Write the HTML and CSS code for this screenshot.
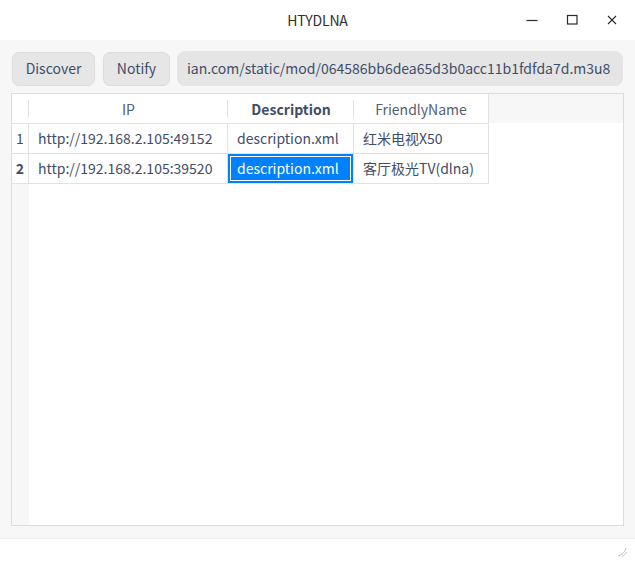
FILE: index.html
```html
<!DOCTYPE html>
<html>
<head>
<meta charset="utf-8">
<link rel="stylesheet" href="styles.css">
</head>
<body>
<div class="window">
  <div class="titlebar">
    <div class="title">HTYDLNA</div>
    <div class="controls">
      <svg class="ctl" width="16" height="16" viewBox="0 0 16 16"><path d="M2.5 8.5h11" stroke="#2b2b2b" stroke-width="1.2"/></svg>
      <svg class="ctl" width="16" height="16" viewBox="0 0 16 16"><rect x="3.5" y="3.5" width="9.5" height="8.5" fill="none" stroke="#2b2b2b" stroke-width="1.2"/></svg>
      <svg class="ctl" width="16" height="16" viewBox="0 0 16 16"><path d="M4 4l8 8M12 4l-8 8" stroke="#2b2b2b" stroke-width="1.1"/></svg>
    </div>
  </div>
  <div class="main">
    <div class="toolbar">
      <button class="btn btn-discover">Discover</button>
      <button class="btn btn-notify">Notify</button>
      <div class="lineedit"><span>ian.com/static/mod/064586bb6dea65d3b0acc11b1fdfda7d.m3u8</span></div>
    </div>
    <div class="table">
      <div class="row header">
        <div class="cell vh"></div>
        <div class="cell c-ip hc">IP</div>
        <div class="cell c-desc hc bold">Description</div>
        <div class="cell c-fn hc">FriendlyName</div>
        <div class="hfill"></div>
      </div>
      <div class="row">
        <div class="cell vh">1</div>
        <div class="cell c-ip">http://192.168.2.105:49152</div>
        <div class="cell c-desc">description.xml</div>
        <div class="cell c-fn">红米电视X50</div>
      </div>
      <div class="row">
        <div class="cell vh bold">2</div>
        <div class="cell c-ip">http://192.168.2.105:39520</div>
        <div class="cell c-desc selected"><span class="focus">description.xml</span></div>
        <div class="cell c-fn">客厅极光TV(dlna)</div>
      </div>
      <div class="rest">
        <div class="vhfill"></div>
      </div>
    </div>
  </div>
  <div class="statusbar">
    <svg class="grip" width="10" height="10" viewBox="0 0 10 10"><path d="M1 9C5 8 8 5 9 1M5 9.5C7 8.5 8.5 7 9.5 5" fill="none" stroke="#b8b8b8" stroke-width="0.9"/></svg>
  </div>
</div>
</body>
</html>
```

FILE: styles.css
```css
* { box-sizing: border-box; }
html, body {
  margin: 0;
  padding: 0;
  width: 635px;
  height: 565px;
  overflow: hidden;
  background: #ffffff;
  font-family: "Noto Sans CJK SC", "Noto Sans", sans-serif;
}
.window {
  width: 635px;
  height: 565px;
  display: flex;
  flex-direction: column;
}
.titlebar {
  height: 40px;
  background: #ffffff;
  position: relative;
  display: flex;
  align-items: center;
  justify-content: center;
}
.title {
  font-size: 14px;
  color: #303030;
  letter-spacing: -0.2px;
}
.controls {
  position: absolute;
  right: 15px;
  top: 12px;
  display: flex;
  gap: 24px;
}
.ctl { display: block; }
.main {
  flex: 1;
  background: #f7f7f7;
  padding: 11px 11px 12px 11px;
  display: flex;
  flex-direction: column;
}
.toolbar {
  height: 35px;
  display: flex;
  align-items: center;
  gap: 8px;
  margin-bottom: 7px;
}
.btn {
  font-family: inherit;
  font-size: 14px;
  color: #414d68;
  background: #e6e6e6;
  border: 1px solid #dcdcdc;
  border-radius: 7px;
  height: 34px;
  padding: 0 0 1px 0;
  margin: 0;
}
.btn-discover { width: 83px; margin-left: 1px; }
.btn-notify { width: 67px; margin-right: -1px; }
.lineedit {
  flex: 1;
  height: 35px;
  margin-right: 1px;
  background: #e5e5e5;
  border-radius: 8px;
  display: flex;
  align-items: center;
  padding-left: 10px;
  padding-bottom: 1px;
  overflow: hidden;
  white-space: nowrap;
  font-size: 14px;
  color: #414d68;
}
.table {
  flex: 1;
  border: 1px solid #dcdcdc;
  background: #ffffff;
  display: flex;
  flex-direction: column;
  font-size: 14px;
  color: #414d68;
}
.row {
  display: flex;
  height: 30px;
}
.cell {
  height: 30px;
  border-right: 1px solid #e2e2e2;
  border-bottom: 1px solid #e2e2e2;
  display: flex;
  align-items: center;
  white-space: nowrap;
  padding-left: 9px;
  padding-bottom: 1px;
}
.vh { width: 17px; padding-left: 0; justify-content: center; color: #414d68; }
.c-ip { width: 199px; }
.c-desc { width: 126px; }
.c-fn { width: 135px; }
.header .cell {
  border-right: none;
  position: relative;
  justify-content: center;
  padding-left: 0;
  padding-bottom: 0;
  color: #526072;
}
.header .cell::after {
  content: "";
  position: absolute;
  right: 0;
  top: 6px;
  height: 18px;
  border-right: 1px solid #e2e2e2;
}
.header .c-ip { width: 199px; }
.header .c-desc { width: 126px; }
.header .c-fn { width: 135px; border-right: 1px solid #e2e2e2; }
.header .c-fn::after { display: none; }
.header .vh { width: 17px; }
.header .bold { color: #414d68; }
.hfill {
  flex: 1;
  height: 29px;
  background: #f7f7f7;
}
.bold { font-weight: bold; }
.selected {
  background: #0081ff;
  padding: 2px;
}
.focus {
  flex: 1;
  height: 25px;
  border: 1px solid #ffffff;
  color: #ffffff;
  display: flex;
  align-items: center;
  padding-left: 6px;
  padding-bottom: 1px;
}
.rest {
  flex: 1;
  display: flex;
}
.vhfill {
  width: 17px;
  background: #f7f7f7;
}
.statusbar {
  height: 27px;
  background: #ffffff;
  border-top: 1px solid #eeeeee;
  position: relative;
}
.grip {
  position: absolute;
  right: 8px;
  bottom: 8px;
}
```
